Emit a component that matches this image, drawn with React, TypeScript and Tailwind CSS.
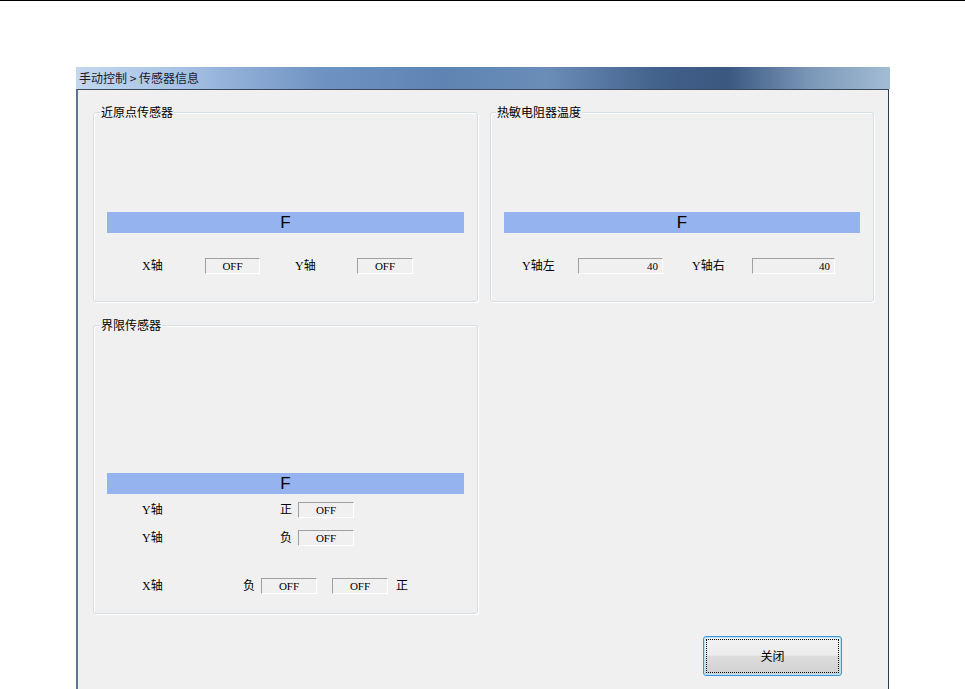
import React from "react"

const cjk = "font-['SimSun','Noto_Sans_CJK_SC',sans-serif]"

function Field({ value, width, align = "center" }: { value: string; width: string; align?: "center" | "right" }) {
  return (
    <div
      className={`${width} h-[16px] border-t border-l border-t-[#a0a0a0] border-l-[#a0a0a0] border-b border-r border-b-white border-r-white bg-[#f0f0f0] flex items-center ${
        align === "right" ? "justify-end pr-[4px]" : "justify-center"
      } font-['Liberation_Serif',serif] text-[11px] leading-none text-black`}
    >
      {value}
    </div>
  )
}

function Label({ text, width }: { text: string; width?: string }) {
  return (
    <span className={`${width ?? ""} shrink-0 text-[12px] leading-none text-black font-['Liberation_Serif','Noto_Sans_CJK_SC',serif]`}>
      {text}
    </span>
  )
}

function GroupBox({
  title,
  className,
  labelLeft,
  children,
}: {
  title: string
  className: string
  labelLeft: string
  children: React.ReactNode
}) {
  return (
    <div className={`relative rounded-[3px] border border-[#d5dfe5] shadow-[inset_1px_1px_0_#ffffff,1px_1px_0_#ffffff] ${className}`}>
      <span
        className={`absolute -top-[8px] ${labelLeft} bg-[#f0f0f0] px-px text-[12px] leading-[14px] text-black font-['Noto_Sans_CJK_SC',sans-serif]`}
      >
        {title}
      </span>
      {children}
    </div>
  )
}

function StatusBar({ mt }: { mt: string }) {
  return (
    <div className={`${mt} mx-[13px] h-[21px] bg-[#95b3ee] flex items-center justify-center`}>
      <span className="font-['Liberation_Sans',sans-serif] text-[17px] leading-none text-black">F</span>
    </div>
  )
}

export default function App() {
  return (
    <div className={`w-[965px] h-[689px] bg-white overflow-hidden ${cjk}`}>
      <div className="h-px bg-black" />
      <div className="ml-[76px] mt-[66px] w-[814px]">
        {/* title bar */}
        <div className="h-[22px] bg-[linear-gradient(to_right,#c3d7ee_0%,#a9c4e6_12%,#6f93c2_30%,#5f84b3_45%,#6a8db8_58%,#41608a_72%,#3a5880_80%,#7a97b8_90%,#a3bcd4_100%)] flex items-center pl-[3px]">
          <span className="text-[12px] leading-none text-[#1a1a2a] font-['Noto_Sans_CJK_SC',sans-serif]">
            手动控制 &gt; 传感器信息
          </span>
        </div>
        {/* content */}
        <div className="w-[813px] h-[601px] bg-[#f0f0f0] border-t border-t-[#3a4a5c] border-l-[2px] border-l-[#5d7391] border-r border-r-[#2c3b4e]">
          <div className="flex pl-[15px] pt-[22px] gap-[12px]">
            <GroupBox title="近原点传感器" className="w-[385px] h-[190px]" labelLeft="left-[6px]">
              <StatusBar mt="mt-[99px]" />
              <div className="mt-[25px] flex items-center pl-[48px]">
                <Label text="X轴" width="w-[63px]" />
                <Field value="OFF" width="w-[55px]" />
                <div className="w-[35px]" />
                <Label text="Y轴" width="w-[62px]" />
                <Field value="OFF" width="w-[56px]" />
              </div>
            </GroupBox>
            <GroupBox title="热敏电阻器温度" className="w-[384px] h-[190px]" labelLeft="left-[5px]">
              <StatusBar mt="mt-[99px]" />
              <div className="mt-[25px] flex items-center pl-[31px]">
                <Label text="Y轴左" width="w-[56px]" />
                <Field value="40" width="w-[85px]" align="right" />
                <div className="w-[29px]" />
                <Label text="Y轴右" width="w-[60px]" />
                <Field value="40" width="w-[83px]" align="right" />
              </div>
            </GroupBox>
          </div>
          <div className="pl-[15px] mt-[23px]">
            <GroupBox title="界限传感器" className="w-[385px] h-[289px]" labelLeft="left-[6px]">
              <StatusBar mt="mt-[147px]" />
              <div className="mt-[8px] flex items-center pl-[48px]">
                <Label text="Y轴" width="w-[138px]" />
                <Label text="正" width="w-[18px]" />
                <Field value="OFF" width="w-[56px]" />
              </div>
              <div className="mt-[12px] flex items-center pl-[48px]">
                <Label text="Y轴" width="w-[138px]" />
                <Label text="负" width="w-[18px]" />
                <Field value="OFF" width="w-[56px]" />
              </div>
              <div className="mt-[32px] flex items-center pl-[48px]">
                <Label text="X轴" width="w-[101px]" />
                <Label text="负" width="w-[18px]" />
                <Field value="OFF" width="w-[56px]" />
                <div className="w-[15px]" />
                <Field value="OFF" width="w-[56px]" />
                <div className="w-[8px]" />
                <Label text="正" />
              </div>
            </GroupBox>
          </div>
          <div className="flex justify-end pr-[46px] mt-[22px]">
            <button className="w-[139px] h-[40px] rounded-[3px] border border-[#3c96d6] shadow-[inset_0_0_0_1px_#b8e0f8] bg-[linear-gradient(to_bottom,#f3f3f3_0%,#ececec_48%,#dddddd_50%,#d0d0d0_100%)] p-[2px]">
              <div className="w-full h-full border border-dotted border-black flex items-center justify-center text-[12px] leading-none text-black font-['Noto_Sans_CJK_SC',sans-serif]">
                关闭
              </div>
            </button>
          </div>
        </div>
      </div>
    </div>
  )
}
